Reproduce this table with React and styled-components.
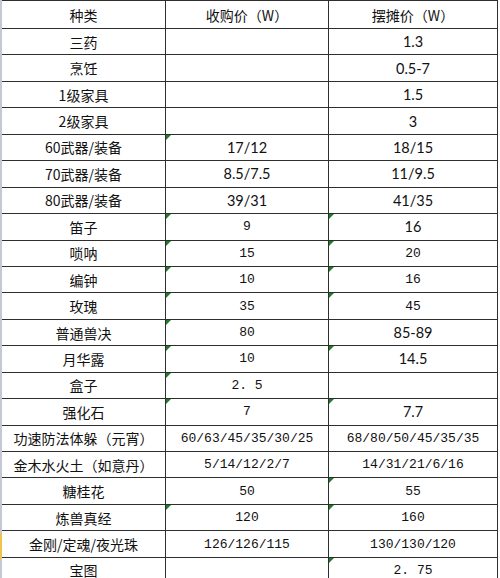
import React from "react";
import styled, { createGlobalStyle, css } from "styled-components";

const Global = createGlobalStyle`
  html, body { margin: 0; padding: 0; background: #fff; }
  body { width: 500px; height: 578px; overflow: hidden; }
`;

const Page = styled.div`
  display: flex;
  width: 500px;
  height: 578px;
  overflow: hidden;
  background: #fff;
`;

const RowHeaderStrip = styled.div`
  width: 2px;
  flex: none;
  display: flex;
  flex-direction: column;
  background: #c3c8d4;
`;

const StripMark = styled.div`
  margin-top: 533px;
  height: 26px;
  background: #f2c34a;
`;

const Sheet = styled.div`
  display: flex;
  flex-direction: column;
  width: 496px;
`;

const TitleClip = styled.div`
  height: 2px;
  overflow: hidden;
  display: flex;
  justify-content: center;
  padding-left: 26px;
`;

const TitleText = styled.div`
  font-family: "Noto Sans CJK SC", sans-serif;
  font-size: 17px;
  font-weight: 700;
  line-height: 18px;
  margin-top: -15px;
  color: #111;
`;

const Grid = styled.div`
  display: grid;
  grid-template-columns: 164px 163px 169px;
  grid-template-rows: 28px;
  grid-auto-rows: 26.45px;
  border-top: 1px solid #2e2e2e;
`;

const fontFor = {
  cjk: css`
    font-family: "Noto Sans CJK SC", sans-serif;
    font-size: 14px;
  `,
  cal: css`
    font-family: Lato, "Open Sans", sans-serif;
    font-size: 14.5px;
  `,
  song: css`
    font-family: "Liberation Mono", monospace;
    font-size: 13px;
  `,
};

const Cell = styled.div`
  position: relative;
  box-sizing: border-box;
  border-bottom: 1px solid #2e2e2e;
  border-right: 1px solid #2e2e2e;
  display: flex;
  align-items: center;
  justify-content: center;
  color: #111;
  white-space: nowrap;
  overflow: hidden;
  ${(p) => fontFor[p.$font || "cjk"]}
  ${(p) =>
    p.$flag &&
    css`
      &::before {
        content: "";
        position: absolute;
        left: 0;
        top: 0;
        border-top: 5px solid #1f7a2a;
        border-right: 5px solid transparent;
      }
    `}
`;

const C = "cal";
const S = "song";

const rows = [
  ["三药", null, ["1.3", C]],
  ["烹饪", null, ["0.5-7", C]],
  ["1级家具", null, ["1.5", C]],
  ["2级家具", null, ["3", C]],
  ["60武器/装备", ["17/12", C, 1], ["18/15", C]],
  ["70武器/装备", ["8.5/7.5", C], ["11/9.5", C]],
  ["80武器/装备", ["39/31", C], ["41/35", C]],
  ["笛子", ["9", S, 1], ["16", C, 1]],
  ["唢呐", ["15", S, 1], ["20", S, 1]],
  ["编钟", ["10", S, 1], ["16", S, 1]],
  ["玫瑰", ["35", S, 1], ["45", S, 1]],
  ["普通兽决", ["80", S, 1], ["85-89", C]],
  ["月华露", ["10", S, 1], ["14.5", C, 1]],
  ["盒子", ["2. 5", S, 1], null],
  ["强化石", ["7", S, 1], ["7.7", C, 1]],
  ["功速防法体躲（元宵）", ["60/63/45/35/30/25", S], ["68/80/50/45/35/35", S]],
  ["金木水火土（如意丹）", ["5/14/12/2/7", S], ["14/31/21/6/16", S]],
  ["糖桂花", ["50", S], ["55", S, 1]],
  ["炼兽真经", ["120", S, 1], ["160", S, 1]],
  ["金刚/定魂/夜光珠", ["126/126/115", S], ["130/130/120", S]],
  ["宝图", null, ["2. 75", S, 1]],
];

function ValueCell({ v }) {
  if (!v) return <Cell />;
  const [text, font, flag] = v;
  return (
    <Cell $font={font} $flag={!!flag}>
      {text}
    </Cell>
  );
}

export default function App() {
  return (
    <>
      <Global />
      <Page>
        <RowHeaderStrip>
          <StripMark />
        </RowHeaderStrip>
        <Sheet>
          <TitleClip>
            <TitleText>梦幻西游物品价格表</TitleText>
          </TitleClip>
          <Grid>
            <Cell>种类</Cell>
            <Cell>收购价（W）</Cell>
            <Cell>摆摊价（W）</Cell>
            {rows.map((r, i) => (
              <React.Fragment key={i}>
                <Cell>{r[0]}</Cell>
                <ValueCell v={r[1]} />
                <ValueCell v={r[2]} />
              </React.Fragment>
            ))}
          </Grid>
        </Sheet>
      </Page>
    </>
  );
}
